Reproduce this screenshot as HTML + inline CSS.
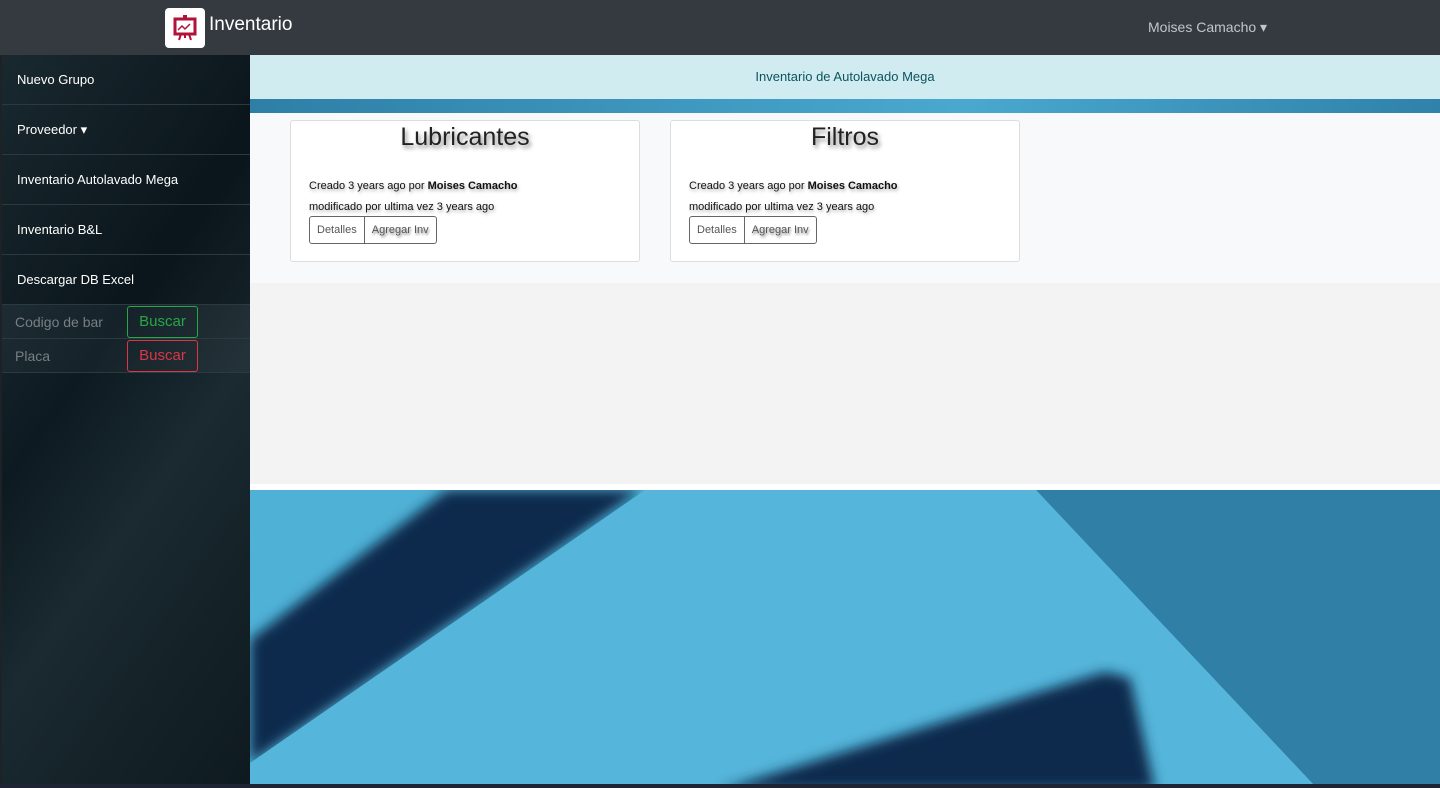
<!DOCTYPE html>
<html><head><style>
*{box-sizing:border-box;margin:0;padding:0}
html,body{width:1440px;height:788px;overflow:hidden}
body{font-family:"Liberation Sans",sans-serif;background:#1e2226;position:relative}
.nav{position:absolute;left:0;top:0;width:1440px;height:55px;background:#343a40}
.logo{position:absolute;left:165px;top:8px;width:40px;height:40px;background:#fff;border-radius:4px}
.brand{position:absolute;left:209px;top:14px;color:#fff;font-size:19px}
.user{position:absolute;left:1148px;top:19px;color:#c3c6c9;font-size:14px}
.side{position:absolute;left:2px;top:55px;width:248px;height:729px;background:linear-gradient(125deg,#1f3038 0%,#0d1a21 40%,#1a2a30 60%,#0e1a20 100%)}
.side .it{height:50px;border-bottom:1px solid #2a3a40;color:#fff;font-size:13px;padding:17px 0 0 15px;background:rgba(0,0,0,.15)}
.row{height:34px;border-bottom:1px solid #2a3a40;position:relative;background:rgba(255,255,255,.04)}
.row span{position:absolute;left:13px;top:9px;color:#777f84;font-size:14px}
.row b{position:absolute;left:125px;top:1px;width:71px;height:32px;border:1px solid;border-radius:3px;font-weight:normal;font-size:15px;text-align:center;line-height:30px}
.main{position:absolute;left:250px;top:55px;width:1190px;height:729px;overflow:hidden;background:linear-gradient(90deg,#2d7fa6,#4aa8cf 60%,#2f82aa)}
.alert{position:absolute;left:0;top:0;width:1190px;height:44px;background:#d1ecf1;color:#0c5460;font-size:13px;text-align:center;line-height:44px}
.p1{position:absolute;left:0;top:58px;width:1190px;height:170px;background:#f8f9fa}
.p2{position:absolute;left:0;top:228px;width:1190px;background:#f3f3f3;border-bottom:6px solid #fff;height:207px}
.card{position:absolute;top:65px;width:350px;height:142px;background:#fff;border:1px solid #ddd;border-radius:3px}
.card h2{text-align:center;font-weight:normal;font-size:25px;color:#222;margin-top:2px;text-shadow:2px 3px 4px #888}
.card p{font-size:11px;color:#111;margin-left:18px;text-shadow:1px 2px 3px #aaa;line-height:21px}
.card p:first-of-type{margin-top:24px}
.bg{position:absolute;left:18px;top:95px;display:flex;border:1px solid #666;border-radius:3px;height:28px}
.bg div{font-size:11px;color:#555;padding:0 7px;line-height:27px}
.bg div+div{border-left:1px solid #666;text-shadow:1px 2px 2px #888}
.art{position:absolute;left:0;top:435px}
.foot{position:absolute;left:0;top:784px;width:1440px;height:4px;background:#1e2434}
</style></head><body>
<div class="nav">
<div class="logo"><svg width="40" height="40" viewBox="0 0 40 40"><rect x="10" y="11" width="20" height="15" fill="none" stroke="#b0123a" stroke-width="3"/><path d="M13 22l4-4 3 3 5-5" stroke="#b0123a" stroke-width="1.5" fill="none"/><path d="M16 26l-2 6M24 26l2 6M20 26v4M19 8h2v3h-2z" stroke="#b0123a" stroke-width="2"/></svg></div>
<div class="brand">Inventario</div>
<div class="user">Moises Camacho &#9662;</div>
</div>
<div class="side">
<div class="it">Nuevo Grupo</div>
<div class="it">Proveedor ▾</div>
<div class="it">Inventario Autolavado Mega</div>
<div class="it">Inventario B&amp;L</div>
<div class="it">Descargar DB Excel</div>
<div class="row"><span>Codigo de bar</span><b style="color:#28a745;border-color:#28a745">Buscar</b></div>
<div class="row"><span>Placa</span><b style="color:#dc3545;border-color:#dc3545">Buscar</b></div>
</div>
<div class="main">
<svg class="art" width="1190" height="294" viewBox="0 0 1190 294">
<defs><filter id="b" x="-10%" y="-10%" width="120%" height="120%"><feGaussianBlur stdDeviation="6"/></filter></defs>
<rect width="1190" height="294" fill="#4fb1d6"/>
<polygon points="786,0 1190,0 1190,294 1063,294" fill="#2f7fa7"/>
<polygon points="197,0 391,0 0,273 0,150" fill="#0c2a4d" filter="url(#b)"/>
<polygon points="395,0 786,0 1063,294 0,294 0,273" fill="#55b5da"/>
<polygon points="855,182 880,188 905,300 470,300" fill="#0c2a4d" filter="url(#b)"/>
</svg>
<div class="alert">Inventario de Autolavado Mega</div>
<div class="p1"></div><div class="p2"></div>
<div class="card" style="left:40px"><h2>Lubricantes</h2><p>Creado 3 years ago por <b>Moises Camacho</b></p><p>modificado por ultima vez 3 years ago</p><div class="bg"><div>Detalles</div><div>Agregar Inv</div></div></div>
<div class="card" style="left:420px"><h2>Filtros</h2><p>Creado 3 years ago por <b>Moises Camacho</b></p><p>modificado por ultima vez 3 years ago</p><div class="bg"><div>Detalles</div><div>Agregar Inv</div></div></div>
</div>
<div class="foot"></div>
</body></html>
